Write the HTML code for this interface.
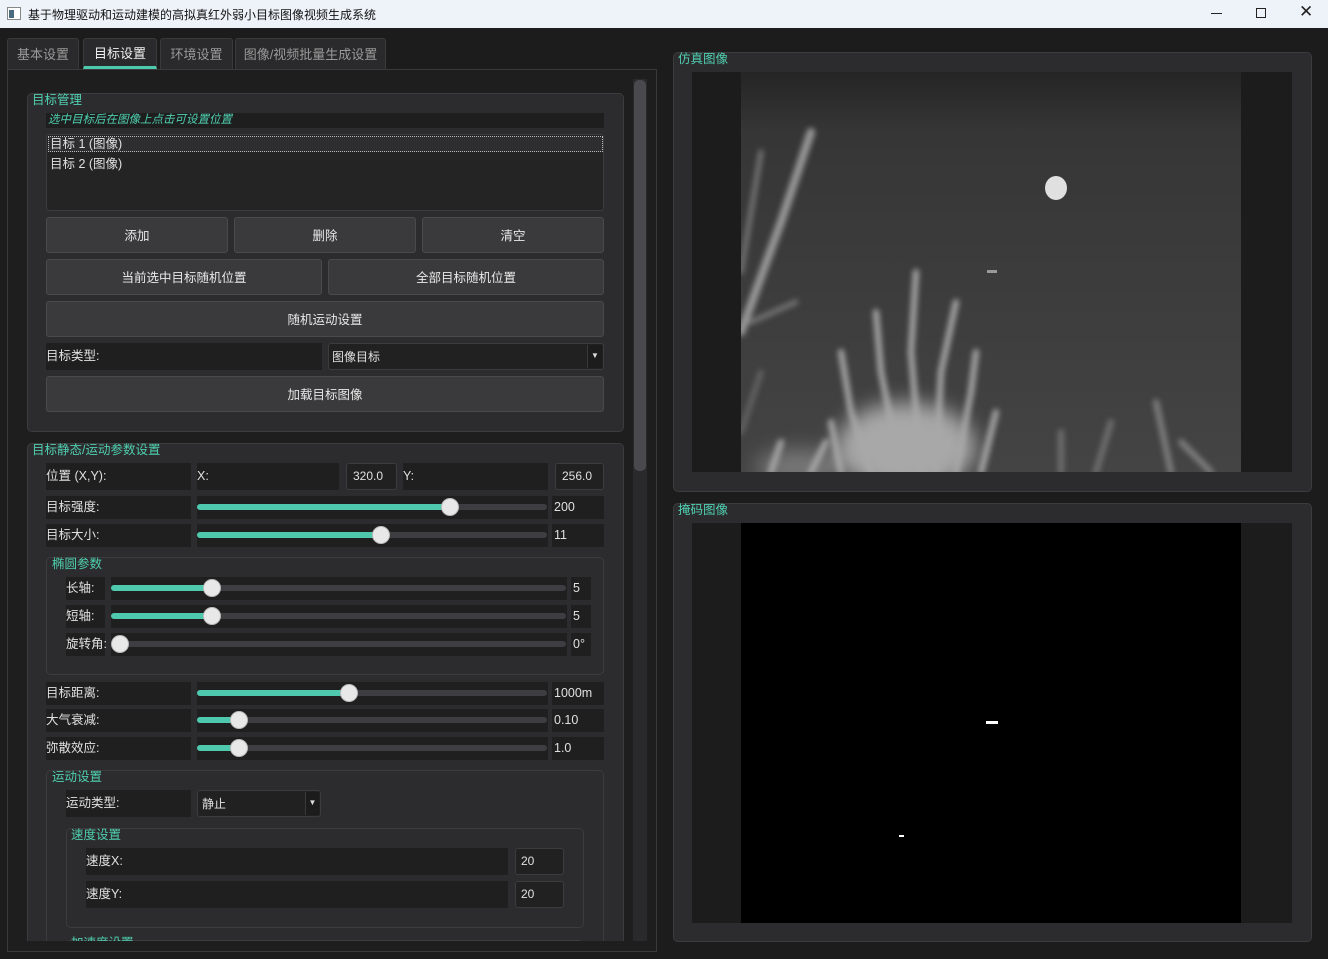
<!DOCTYPE html>
<html><head><meta charset="utf-8"><style>
*{box-sizing:border-box;margin:0;padding:0;white-space:nowrap}
html{overflow:hidden;width:1328px;height:959px}
body{width:1328px;height:959px;background:#1c1c1c;font-family:"Liberation Sans","Noto Sans CJK SC",sans-serif;font-size:12px;color:#e0e0e0;position:relative;overflow:hidden}
.a{position:absolute}
.title{left:0;top:0;width:1328px;height:28px;background:#eef3fa;color:#111}
.tab{top:38px;height:31px;background:#2a2a2c;border:1px solid #3a3a3c;border-bottom:none;border-radius:3px 3px 0 0;color:#9a9a9a;font-size:13px;text-align:center;line-height:32px}
.tab.on{top:38px;color:#f0f0f0;background:#2a2a2c;line-height:29px}
.grp{background:#2c2c2e;border:1px solid #3c3c3e;border-radius:5px}
.gt{color:#4fcfb0;font-size:12.5px;background:transparent}
.btn{background:#3a3a3c;border:1px solid #4a4a4c;border-radius:3px;color:#e8e8e8;text-align:center;font-size:12.5px}
.lbl{background:#1f1f1f;color:#e0e0e0;font-size:12.5px;padding-left:0}
.inp{background:#212121;border:1px solid #3c3c3e;border-radius:3px;color:#e0e0e0;font-size:12px;padding-left:6px}
.tr{background:#3e3e42;height:6px;border-radius:3px}
.fill{background:#4ec9ad;height:6px;border-radius:3px}
.hd{width:18px;height:18px;border-radius:50%;background:#e8e8e8;border:1px solid #bbb}
.sl{background:#1f1f1f}
</style></head><body>
<div class="a title">
 <div class="a" style="left:7px;top:7px;width:14px;height:13px;border:1px solid #888;background:#fff"><div class="a" style="left:1px;top:2px;width:5px;height:8px;background:#4a6a80"></div></div>
 <div class="a" style="left:28px;top:6px;font-size:12px">基于物理驱动和运动建模的高拟真红外弱小目标图像视频生成系统</div>
 <div class="a" style="left:1211px;top:13px;width:11px;height:1px;background:#222"></div>
 <div class="a" style="left:1256px;top:8px;width:10px;height:10px;border:1px solid #222"></div>
 <div class="a" style="left:1299px;top:2px;font-size:17px;color:#222">✕</div>
</div>

<div class="a tab" style="left:7px;width:72px">基本设置</div>
<div class="a tab on" style="left:83px;width:74px;border-bottom:3px solid #4ec9ad;height:31px">目标设置</div>
<div class="a tab" style="left:160px;width:73px">环境设置</div>
<div class="a tab" style="left:235px;width:151px">图像/视频批量生成设置</div>

<div class="a" style="left:7px;top:69px;width:650px;height:883px;border:1px solid #3a3a3c;background:#1e1e1e"></div>
<div class="a" style="left:633px;top:79px;width:14px;height:862px;background:#2a2a2c"></div>
<div class="a" style="left:634px;top:80px;width:12px;height:391px;background:#4a4a4e;border-radius:5px"></div>

<div class="a" style="left:8px;top:70px;width:624px;height:871px;overflow:hidden">
<div style="position:absolute;left:-8px;top:-70px;width:660px;height:941px;overflow:hidden">
 <div class="a grp" style="left:27px;top:93px;width:597px;height:339px"></div>
 <div class="a gt" style="left:32px;top:89px">目标管理</div>
 <div class="a" style="left:46px;top:113px;width:558px;height:15px;background:#1e1e1e;color:#4fcfb0;font-style:italic;font-size:11.5px;line-height:15px;padding-left:2px">选中目标后在图像上点击可设置位置</div>
 <div class="a" style="left:46px;top:134px;width:558px;height:77px;background:#242424;border:1px solid #3c3c3e;border-radius:3px"></div>
 <div class="a" style="left:48px;top:136px;width:555px;height:16px;border:1px dotted #bbb;background:#2e2e30;font-size:12.5px;line-height:14px;padding-left:1px">目标 1 (图像)</div>
 <div class="a" style="left:50px;top:153px;font-size:12.5px">目标 2 (图像)</div>
 <div class="a btn" style="left:46px;top:217px;width:182px;height:36px;line-height:36px">添加</div>
 <div class="a btn" style="left:234px;top:217px;width:182px;height:36px;line-height:36px">删除</div>
 <div class="a btn" style="left:422px;top:217px;width:182px;height:36px;line-height:36px">清空</div>
 <div class="a btn" style="left:46px;top:259px;width:276px;height:36px;line-height:36px">当前选中目标随机位置</div>
 <div class="a btn" style="left:328px;top:259px;width:276px;height:36px;line-height:36px">全部目标随机位置</div>
 <div class="a btn" style="left:46px;top:301px;width:558px;height:36px;line-height:36px">随机运动设置</div>
 <div class="a lbl" style="left:46px;top:343px;width:276px;height:27px;line-height:27px">目标类型:</div>
 <div class="a inp" style="left:328px;top:343px;width:276px;height:27px;line-height:26px;padding-left:3px">图像目标</div>
 <div class="a" style="left:587px;top:345px;width:15px;height:23px;background:#1c1c1c;border-left:1px solid #3a3a3a;color:#ddd;font-size:8px;text-align:center;line-height:22px">▼</div>
 <div class="a btn" style="left:46px;top:376px;width:558px;height:36px;line-height:36px">加载目标图像</div>

 <div class="a grp" style="left:27px;top:443px;width:597px;height:520px"></div>
 <div class="a gt" style="left:32px;top:439px">目标静态/运动参数设置</div>
 <div class="a lbl" style="left:46px;top:463px;width:145px;height:27px;line-height:27px">位置 (X,Y):</div>
 <div class="a lbl" style="left:197px;top:463px;width:142px;height:27px;line-height:27px">X:</div>
 <div class="a inp" style="left:346px;top:463px;width:51px;height:27px;line-height:25px">320.0</div>
 <div class="a lbl" style="left:403px;top:463px;width:145px;height:27px;line-height:27px">Y:</div>
 <div class="a inp" style="left:555px;top:463px;width:49px;height:27px;line-height:25px">256.0</div>

 <div class="a lbl" style="left:46px;top:496px;width:145px;height:23px;line-height:23px">目标强度:</div>
 <div class="a sl" style="left:197px;top:496px;width:351px;height:23px"><div class="a tr" style="left:0;top:8px;width:350px"></div><div class="a fill" style="left:0;top:8px;width:253px"></div><div class="a hd" style="left:244px;top:2px"></div></div>
 <div class="a lbl" style="left:552px;top:496px;width:52px;height:23px;line-height:23px;padding-left:2px">200</div>
 <div class="a lbl" style="left:46px;top:524px;width:145px;height:23px;line-height:23px">目标大小:</div>
 <div class="a sl" style="left:197px;top:524px;width:351px;height:23px"><div class="a tr" style="left:0;top:8px;width:350px"></div><div class="a fill" style="left:0;top:8px;width:184px"></div><div class="a hd" style="left:175px;top:2px"></div></div>
 <div class="a lbl" style="left:552px;top:524px;width:52px;height:23px;line-height:23px;padding-left:2px">11</div>

 <div class="a grp" style="left:46px;top:557px;width:558px;height:118px;background:#2c2c2e"></div>
 <div class="a gt" style="left:52px;top:553px">椭圆参数</div>
 <div class="a lbl" style="left:66px;top:577px;width:39px;height:23px;line-height:23px">长轴:</div>
 <div class="a sl" style="left:111px;top:577px;width:456px;height:23px"><div class="a tr" style="left:0;top:8px;width:455px"></div><div class="a fill" style="left:0;top:8px;width:100px"></div><div class="a hd" style="left:92px;top:2px"></div></div>
 <div class="a lbl" style="left:571px;top:577px;width:20px;height:23px;line-height:23px;padding-left:2px">5</div>
 <div class="a lbl" style="left:66px;top:605px;width:39px;height:23px;line-height:23px">短轴:</div>
 <div class="a sl" style="left:111px;top:605px;width:456px;height:23px"><div class="a tr" style="left:0;top:8px;width:455px"></div><div class="a fill" style="left:0;top:8px;width:100px"></div><div class="a hd" style="left:92px;top:2px"></div></div>
 <div class="a lbl" style="left:571px;top:605px;width:20px;height:23px;line-height:23px;padding-left:2px">5</div>
 <div class="a lbl" style="left:66px;top:633px;width:39px;height:23px;line-height:23px;overflow:visible">旋转角:</div>
 <div class="a sl" style="left:111px;top:633px;width:456px;height:23px"><div class="a tr" style="left:0;top:8px;width:455px"></div><div class="a hd" style="left:0;top:2px"></div></div>
 <div class="a lbl" style="left:571px;top:633px;width:20px;height:23px;line-height:23px;padding-left:2px">0°</div>

 <div class="a lbl" style="left:46px;top:682px;width:145px;height:23px;line-height:23px">目标距离:</div>
 <div class="a sl" style="left:197px;top:682px;width:351px;height:23px"><div class="a tr" style="left:0;top:8px;width:350px"></div><div class="a fill" style="left:0;top:8px;width:152px"></div><div class="a hd" style="left:143px;top:2px"></div></div>
 <div class="a lbl" style="left:552px;top:682px;width:52px;height:23px;line-height:23px;padding-left:2px">1000m</div>
 <div class="a lbl" style="left:46px;top:709px;width:145px;height:23px;line-height:23px">大气衰减:</div>
 <div class="a sl" style="left:197px;top:709px;width:351px;height:23px"><div class="a tr" style="left:0;top:8px;width:350px"></div><div class="a fill" style="left:0;top:8px;width:42px"></div><div class="a hd" style="left:33px;top:2px"></div></div>
 <div class="a lbl" style="left:552px;top:709px;width:52px;height:23px;line-height:23px;padding-left:2px">0.10</div>
 <div class="a lbl" style="left:46px;top:737px;width:145px;height:23px;line-height:23px">弥散效应:</div>
 <div class="a sl" style="left:197px;top:737px;width:351px;height:23px"><div class="a tr" style="left:0;top:8px;width:350px"></div><div class="a fill" style="left:0;top:8px;width:42px"></div><div class="a hd" style="left:33px;top:2px"></div></div>
 <div class="a lbl" style="left:552px;top:737px;width:52px;height:23px;line-height:23px;padding-left:2px">1.0</div>

 <div class="a grp" style="left:46px;top:770px;width:558px;height:300px"></div>
 <div class="a gt" style="left:52px;top:766px">运动设置</div>
 <div class="a lbl" style="left:66px;top:790px;width:125px;height:27px;line-height:27px">运动类型:</div>
 <div class="a inp" style="left:197px;top:790px;width:124px;height:27px;line-height:26px;padding-left:4px">静止</div>
 <div class="a" style="left:305px;top:792px;width:14px;height:23px;background:#1c1c1c;border-left:1px solid #3a3a3a;color:#ddd;font-size:8px;text-align:center;line-height:22px">▼</div>
 <div class="a grp" style="left:66px;top:828px;width:518px;height:100px"></div>
 <div class="a gt" style="left:71px;top:824px">速度设置</div>
 <div class="a lbl" style="left:86px;top:848px;width:422px;height:27px;line-height:27px">速度X:</div>
 <div class="a inp" style="left:515px;top:848px;width:49px;height:27px;line-height:25px;padding-left:5px">20</div>
 <div class="a lbl" style="left:86px;top:881px;width:422px;height:27px;line-height:27px">速度Y:</div>
 <div class="a inp" style="left:515px;top:881px;width:49px;height:27px;line-height:25px;padding-left:5px">20</div>
 <div class="a grp" style="left:66px;top:940px;width:518px;height:100px"></div>
 <div class="a gt" style="left:71px;top:932px">加速度设置</div>
</div></div>

<div class="a grp" style="left:673px;top:52px;width:639px;height:440px"></div>
<div class="a gt" style="left:678px;top:48px">仿真图像</div>
<div class="a" style="left:692px;top:72px;width:600px;height:400px;background:#1c1c1c"></div>
<div class="a" style="left:741px;top:72px;width:500px;height:400px;overflow:hidden">
<svg width="500" height="400" viewBox="0 0 500 400">
 <defs>
  <linearGradient id="g" x1="0" y1="0" x2="0" y2="1"><stop offset="0" stop-color="#252525"/><stop offset="0.15" stop-color="#363636"/><stop offset="1" stop-color="#444"/></linearGradient>
 </defs>
 <rect width="500" height="400" fill="url(#g)"/>
 <g style="filter:blur(3px)" stroke="#9a9a9a" fill="none" stroke-linecap="round">
  <path d="M0 260 L40 150 L70 60" stroke-width="8"/>
  <path d="M0 200 L20 80" stroke-width="5" stroke="#777"/>
  <path d="M10 250 L55 230" stroke-width="5" stroke="#777"/>
  <path d="M0 360 L20 300" stroke-width="5" stroke="#666"/>
 </g>
 <g style="filter:blur(10px)"><ellipse cx="165" cy="375" rx="70" ry="45" fill="#a8a8a8"/><ellipse cx="60" cy="395" rx="45" ry="18" fill="#777"/></g>
 <g style="filter:blur(3px)" stroke="#a8a8a8" fill="none" stroke-linecap="round" stroke-width="6">
  <path d="M160 400 L140 300 L135 240"/><path d="M180 400 L170 280 L175 200"/><path d="M195 400 L200 300 L215 230"/>
  <path d="M130 400 L110 340 L100 280"/><path d="M215 400 L230 320 L235 280"/><path d="M240 400 L255 340"/>
  <path d="M100 400 L90 350"/><path d="M70 400 L85 370"/><path d="M30 400 L40 370"/>
  <path d="M320 400 L320 360" stroke="#707070"/><path d="M355 400 L370 350" stroke="#707070"/><path d="M430 400 L415 330" stroke="#808080"/><path d="M470 400 L440 370" stroke="#808080"/>
 </g>
 <ellipse cx="315" cy="116" rx="11" ry="12" fill="#e0e0e0"/>
 <rect x="246" y="198" width="10" height="3" fill="#999"/>
</svg></div>

<div class="a grp" style="left:673px;top:503px;width:639px;height:439px"></div>
<div class="a gt" style="left:678px;top:499px">掩码图像</div>
<div class="a" style="left:692px;top:523px;width:600px;height:400px;background:#1c1c1c"></div>
<div class="a" style="left:741px;top:523px;width:500px;height:400px;background:#000"></div>
<div class="a" style="left:986px;top:721px;width:12px;height:3px;background:#fff"></div>
<div class="a" style="left:899px;top:835px;width:5px;height:2px;background:#fff"></div>
</body></html>
